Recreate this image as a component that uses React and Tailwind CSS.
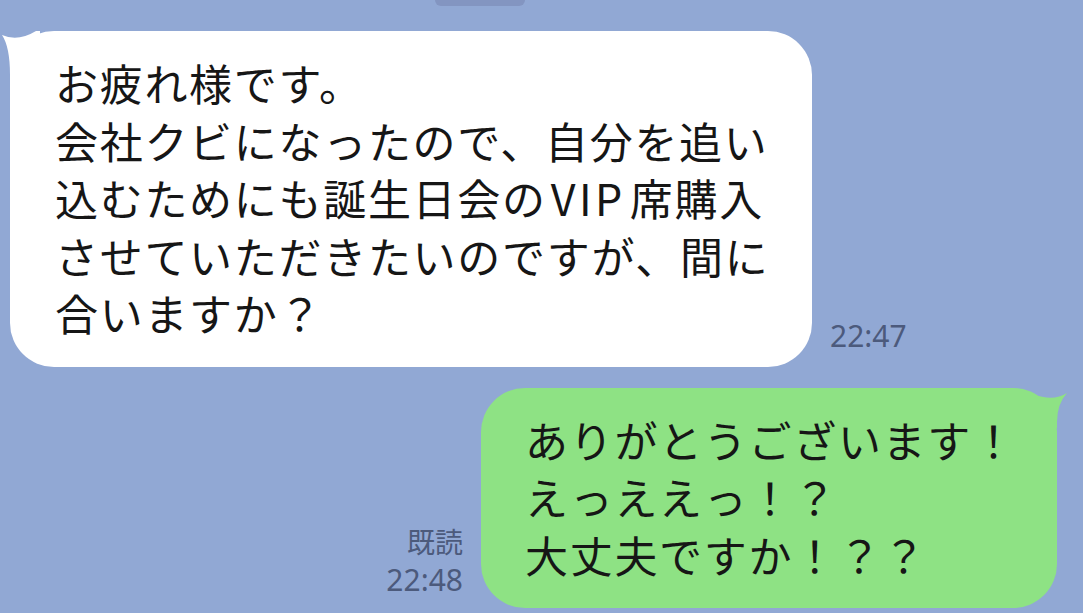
export default function App() {
  return (
    <div className="w-[1083px] h-[613px] bg-[#91a8d4] overflow-hidden flex flex-col font-['Noto_Sans_CJK_JP',sans-serif]">
      {/* date pill cut off at the top */}
      <div className="ml-[435px] w-[90px] h-[6px] rounded-b-[6px] bg-[#8395c1]" />

      {/* incoming */}
      <div className="flex items-end mt-[25px]">
        <div className="relative ml-[10px] w-[802px] rounded-[44px] bg-white pl-[45px] pt-[23px] pb-[25px] text-[43px] leading-[57.5px] tracking-[1.7px] text-[#161616]">
          <svg className="absolute left-[-10px] top-0" width="40" height="44" viewBox="0 0 40 44">
            <path d="M2 4 Q18 11 36 0 L40 0 L40 44 L10 44 Q10 16 2 4 Z" fill="#ffffff" />
          </svg>
          <div className="relative whitespace-nowrap">お疲れ様です。</div>
          <div className="relative whitespace-nowrap">会社クビになったので、自分を追い</div>
          <div className="relative whitespace-nowrap">
            込むためにも誕生日会の<span className="mx-[4px] tracking-[3.5px]">VIP</span>席購入
          </div>
          <div className="relative whitespace-nowrap">させていただきたいのですが、間に</div>
          <div className="relative whitespace-nowrap">合いますか？</div>
        </div>
        <div className="ml-[18px] mb-[13px] text-[30px] leading-[36px] text-[#4c5a7c] font-['Noto_Sans','Noto_Sans_CJK_JP',sans-serif]">
          22:47
        </div>
      </div>

      {/* outgoing */}
      <div className="flex items-end justify-end mt-[21px] mr-[26px]">
        <div className="mr-[18px] mb-[9px] text-right text-[28px] leading-[38px] text-[#4c5a7c] font-['Noto_Sans','Noto_Sans_CJK_JP',sans-serif]">
          <div>既読</div>
          <div className="text-[30px]">22:48</div>
        </div>
        <div className="relative w-[576px] rounded-[44px] bg-[#8ee284] pl-[44px] pt-[23px] pb-[25px] text-[43px] leading-[57.5px] tracking-[1.7px] text-[#161616]">
          <svg className="absolute right-[-12px] top-0" width="40" height="40" viewBox="0 0 40 40">
            <path d="M38 5 Q24 14 4 6 L4 40 L28 40 L28 34 Q28 16 38 5 Z" fill="#8ee284" />
          </svg>
          <div className="relative whitespace-nowrap">ありがとうございます！</div>
          <div className="relative whitespace-nowrap">えっええっ！？</div>
          <div className="relative whitespace-nowrap">大丈夫ですか！？？</div>
        </div>
      </div>
    </div>
  );
}
